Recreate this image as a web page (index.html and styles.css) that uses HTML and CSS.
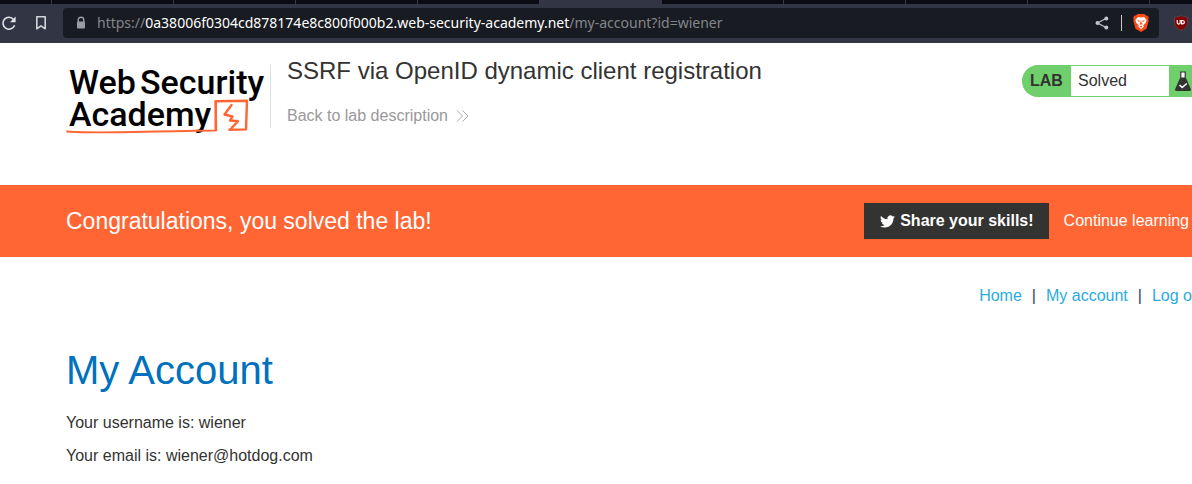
FILE: index.html
```html
<!DOCTYPE html>
<html lang="en">
<head>
<meta charset="utf-8">
<title>SSRF via OpenID dynamic client registration</title>
<link rel="stylesheet" href="styles.css">
</head>
<body>
<div class="browser">
  <div class="tabs">
    <span class="tab tab-first"></span><span class="tab"></span><span class="tab"></span><span class="tab"></span><span class="tab"></span><span class="tab tab-active"></span><span class="tab"></span><span class="tab"></span><span class="tab"></span><span class="tab"></span>
  </div>
  <div class="toolbar">
    <button class="tool" type="button" aria-label="Reload">
      <svg width="16" height="16" viewBox="0 0 16 16" fill="none" stroke="#e4e4e6" stroke-width="1.6"><path d="M13.6 10.3A6 6 0 1 1 12.6 4.4"/><path d="M14.6 1.6v5.6H9z" fill="#e4e4e6" stroke="none"/></svg>
    </button>
    <button class="tool" type="button" aria-label="Bookmark">
      <svg width="12" height="16" viewBox="0 0 12 16" fill="none" stroke="#d4d4d8" stroke-width="1.6"><path d="M1.8 1.8h8.4v12L6 10.8l-4.200 3z" stroke-linejoin="round"/></svg>
    </button>
    <div class="address">
      <svg class="lock" width="10" height="14" viewBox="0 0 10 14"><path d="M2.200 6V4a2.800 2.800 0 0 1 5.600 0v2" fill="none" stroke="#9b9ca3" stroke-width="1.400"/><rect x="1" y="5.500" width="8" height="7" rx="1" fill="#9b9ca3"/></svg>
      <div class="url" role="textbox" aria-label="Address">https://<span class="domain">0a38006f0304cd878174e8c800f000b2.web-security-academy.net</span>/my-account?id=wiener</div>
      <button class="tool" type="button" aria-label="Share">
        <svg width="14" height="14" viewBox="0 0 14 14" fill="#c4c4c6"><path d="M11.500 2.200L2.500 7l9 4.800" fill="none" stroke="#c4c4c6" stroke-width="1.300"/><circle cx="11.300" cy="2.400" r="2"/><circle cx="2.500" cy="7" r="2"/><circle cx="11.300" cy="11.600" r="2"/></svg>
      </button>
      <span class="rule"></span>
      <button class="tool" type="button" aria-label="Brave Shields">
        <svg width="16" height="18" viewBox="0 0 16 18"><path d="M4.500 0h7l1.500 1.500 1.600.2 1.200 2-.5 1.500.4 1.500-2.200 8L8 18l-5.500-3.300-2.200-8 .4-1.500-.5-1.500 1.200-2L3 1.500z" fill="#fb4b14"/><path d="M5 3l3 .5L11 3l2.600 3-1 3-2.400 2.200.6 1.600L8 15l-2.800-2.200.6-1.600L3.400 9l-1-3z" fill="#fff"/><path d="M4 6l2.700.8-.6 1.400zM12 6l-2.700.8.6 1.400zM8 6l.8 3.300L10 10l-2 .8L6 10l1.200-.7zM6.500 12.300L8 11.700l1.500.6L8 13.400z" fill="#fb4b14"/></svg>
      </button>
    </div>
    <button class="tool" type="button" aria-label="uBlock Origin">
      <svg width="14" height="16" viewBox="0 0 14 16"><path d="M7 .5c2 1.200 3.600 1.500 6.500 1.700v5c0 4-2.500 6.300-6.500 8.300C3 13.500.5 11.200.5 7.200v-5C3.400 2 5 1.700 7 .5z" fill="#800000" stroke="#5c4048"/><path d="M3.200 5v2.600c0 2 3 2 3 0V5M7.600 5.500v3.300h.9c2.500 0 2.500-3.300 0-3.300z" fill="none" stroke="#fff" stroke-width="1.200"/></svg>
    </button>
  </div>
</div>

<header class="lab-header">
  <svg class="logo" width="200" height="72" viewBox="0 0 200 72" role="img" aria-label="Web Security Academy">
    <g class="logo-text"><text x="3" y="29">Web</text><text x="74" y="29">Security</text><text x="3" y="61">Academy</text></g>
    <g fill="none" stroke="#ff6633" stroke-linejoin="round" stroke-linecap="round"><path d="M1 66.500Q25 68 68 67T149.500 65.500L150 37" stroke-width="1.800"/><path d="M149.500 36.200L181 35.800 180 64.400 163.500 64.800M149.500 36.200L150 65" stroke-width="2.400"/><path d="M165.500 40L158.500 49.500l8 2-2.500 4 8 .8-7.500 8" stroke-width="2.400"/></g>
  </svg>
  <div class="lab-title">
    <h2 class="title">SSRF via OpenID dynamic client registration</h2>
    <a class="back" href="#">Back to lab description
      <svg width="13" height="12" viewBox="0 0 13 12" fill="none" stroke="#aaa" stroke-width="1"><path d="M1 .5L6.500 6 1 11.500M6.500.5L12 6l-5.500 5.500"/></svg>
    </a>
  </div>
  <div class="status">
    <strong class="status-label">LAB</strong>
    <span class="status-value">Solved</span>
    <span class="status-icon"><svg width="16" height="20" viewBox="0 0 16 20"><path d="M5.500 1h5v7h-5z" fill="#fff"/><path d="M5 1h6M5.800 1v6M10.200 1v6" stroke="#333332" stroke-width="1.200"/><path d="M5.200 6.500h5.600L16 18.500q0 1.500-1.500 1.500h-13Q0 20 0 18.500z" fill="#333332"/><path d="M4.500 14l2.700 2.500L11.800 12.500" fill="none" stroke="#fff" stroke-width="1.600"/></svg></span>
  </div>
</header>

<section class="banner">
  <p class="congrats">Congratulations, you solved the lab!</p>
  <button class="share" type="button">
    <svg width="15" height="15" viewBox="0 0 24 24" fill="#fff"><path d="M23.950 4.570a10 10 0 0 1-2.820.77 4.960 4.960 0 0 0 2.160-2.720c-.95.550-2 .950-3.120 1.180a4.920 4.920 0 0 0-8.390 4.480C7.690 8.100 4.070 6.130 1.640 3.160a4.820 4.820 0 0 0-.67 2.480c0 1.710.87 3.210 2.190 4.100a4.900 4.900 0 0 1-2.230-.62v.06a4.920 4.920 0 0 0 3.950 4.830 5 5 0 0 1-2.210.08 4.940 4.940 0 0 0 4.600 3.420A9.870 9.870 0 0 1 0 19.540a14 14 0 0 0 7.560 2.210c9.050 0 14-7.500 14-13.980 0-.21 0-.42-.02-.63a9.940 9.940 0 0 0 2.410-2.570z"/></svg>
    Share your skills!
  </button>
  <a class="continue" href="#">Continue learning</a>
</section>

<main class="content">
  <nav class="links">
    <a href="#">Home</a><span>|</span><a href="#">My account</a><span>|</span><a href="#">Log o</a>
  </nav>
  <h1 class="heading">My Account</h1>
  <p>Your username is: wiener</p>
  <p>Your email is: wiener@hotdog.com</p>
</main>
</body>
</html>
```
FILE: styles.css
```css
* { box-sizing: border-box; }
body {
  margin: 0;
  background: #fff;
  color: #333332;
  font: 16px/20px "Liberation Sans", Arial, sans-serif;
  overflow-x: hidden;
}
h1, h2, p { margin: 0; font-weight: 400; }
a { text-decoration: none; }
button { border: 0; font: inherit; cursor: pointer; }
svg { display: block; flex: none; }

.browser { background: #323544; }
.tabs { display: flex; height: 4px; overflow: hidden; background: #0b0b14; }
.tab { flex: none; width: 122px; border-right: 1px solid #3a3a40; }
.tab-first { width: 52px; }
.tab-active { background: #323544; border-color: #323544; }
.toolbar { display: flex; align-items: center; padding: 4px 4px 5px 1px; }
.tool { display: flex; padding: 0; background: none; }
.toolbar > .tool:nth-child(2) { margin: 0 16px 0 18px; }
.address {
  display: flex;
  flex: 1;
  align-items: center;
  height: 30px;
  margin-right: 15px;
  padding: 0 10px 0 13px;
  border-radius: 4px;
  background: #181b22;
}
.url {
  flex: 1;
  margin-left: 11px;
  color: #85868a;
  font: 14px/20px "Noto Sans", sans-serif;
  white-space: nowrap;
}
.domain { color: #fff; }
.rule { width: 1px; height: 16px; margin: 0 11px 0 12px; background: #c4c4c6; }

.lab-header { display: flex; align-items: flex-start; height: 142px; padding: 22px 0 0 66px; }
.logo { flex: none; overflow: visible; }
.logo-text { fill: #000; font: 500 34px Roboto, sans-serif; }
.lab-title {
  flex: 1;
  height: 63px;
  margin-left: 4px;
  padding-left: 16px;
  border-left: 1px solid #e0e0e0;
}
.title { margin-top: -10px; font-size: 24px; line-height: 32px; }
.back { display: flex; align-items: center; gap: 8px; margin-top: 19px; color: #999; }
.status {
  display: flex;
  height: 32px;
  border: 1px solid #6fcf6c;
  border-right: 0;
  border-radius: 16px 0 0 16px;
  background: #6fcf6c;
  line-height: 30px;
}
.status-label { width: 48px; padding-left: 7px; }
.status-value { width: 98px; padding-left: 7px; background: #fff; }
.status-icon { display: flex; align-items: center; width: 23px; padding-left: 6px; }

.banner { display: flex; align-items: center; gap: 15px; height: 72px; padding: 0 3px 0 66px; background: #ff6633; color: #fff; }
.congrats { flex: 1; font-size: 23px; line-height: 28px; }
.share { display: flex; align-items: center; gap: 5px; height: 36px; padding: 0 15px 0 16px; background: #333332; color: #fff; font-weight: 700; }
.continue { color: #fff; }

.content { padding: 29px 0 0 66px; }
.content p { margin-bottom: 13px; }
.links { display: flex; justify-content: flex-end; gap: 10px; color: #2c3e66; }
.links a { color: #29abe2; }
.heading { margin: 40px 0 19px; color: #0071bc; font-size: 40px; line-height: 48px; }
```
